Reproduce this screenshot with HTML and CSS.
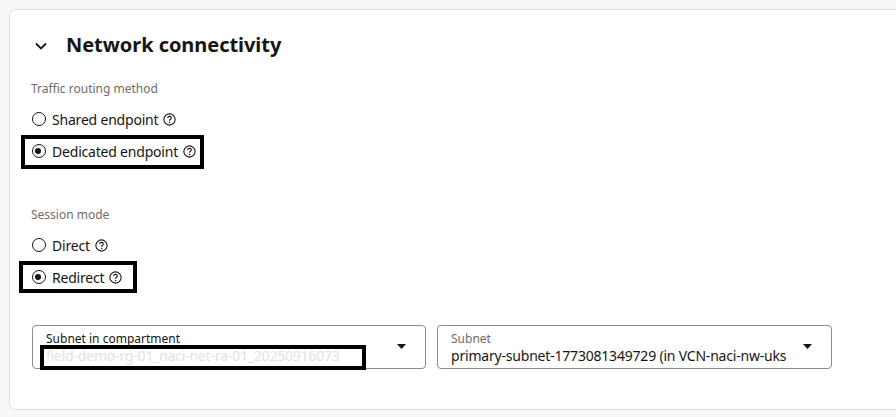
FILE: index.html
```html
<!DOCTYPE html>
<html lang="en">
<head>
<meta charset="utf-8">
<link rel="stylesheet" href="styles.css">
</head>
<body>
<div class="card">
  <div class="header">
    <svg class="chevron" width="12" height="8" viewBox="0 0 12 8"><path d="M1 1.5 L6 6.5 L11 1.5" fill="none" stroke="#161513" stroke-width="1.8"/></svg>
    <h2 class="title">Network connectivity</h2>
  </div>

  <div class="group-label first">Traffic routing method</div>
  <div class="radio-row">
    <span class="radio"></span><span class="radio-text">Shared endpoint</span>
    <svg class="help" width="13" height="13" viewBox="0 0 12 12"><circle cx="6" cy="6" r="5.2" fill="none" stroke="#161513" stroke-width="1"/><path d="M4.3 4.7 C4.3 3.6 5.1 3.1 6 3.1 C6.9 3.1 7.7 3.7 7.7 4.6 C7.7 5.6 6.5 5.7 6.1 6.6 L6.1 7.2" fill="none" stroke="#161513" stroke-width="1"/><circle cx="6.1" cy="8.8" r="0.65" fill="#161513"/></svg>
  </div>
  <div class="radio-row marked marked-wide">
    <span class="radio checked"></span><span class="radio-text">Dedicated endpoint</span>
    <svg class="help" width="13" height="13" viewBox="0 0 12 12"><circle cx="6" cy="6" r="5.2" fill="none" stroke="#161513" stroke-width="1"/><path d="M4.3 4.7 C4.3 3.6 5.1 3.1 6 3.1 C6.9 3.1 7.7 3.7 7.7 4.6 C7.7 5.6 6.5 5.7 6.1 6.6 L6.1 7.2" fill="none" stroke="#161513" stroke-width="1"/><circle cx="6.1" cy="8.8" r="0.65" fill="#161513"/></svg>
    <span class="mark"></span>
  </div>

  <div class="group-label second">Session mode</div>
  <div class="radio-row">
    <span class="radio"></span><span class="radio-text">Direct</span>
    <svg class="help" width="13" height="13" viewBox="0 0 12 12"><circle cx="6" cy="6" r="5.2" fill="none" stroke="#161513" stroke-width="1"/><path d="M4.3 4.7 C4.3 3.6 5.1 3.1 6 3.1 C6.9 3.1 7.7 3.7 7.7 4.6 C7.7 5.6 6.5 5.7 6.1 6.6 L6.1 7.2" fill="none" stroke="#161513" stroke-width="1"/><circle cx="6.1" cy="8.8" r="0.65" fill="#161513"/></svg>
  </div>
  <div class="radio-row marked marked-narrow">
    <span class="radio checked"></span><span class="radio-text">Redirect</span>
    <svg class="help" width="13" height="13" viewBox="0 0 12 12"><circle cx="6" cy="6" r="5.2" fill="none" stroke="#161513" stroke-width="1"/><path d="M4.3 4.7 C4.3 3.6 5.1 3.1 6 3.1 C6.9 3.1 7.7 3.7 7.7 4.6 C7.7 5.6 6.5 5.7 6.1 6.6 L6.1 7.2" fill="none" stroke="#161513" stroke-width="1"/><circle cx="6.1" cy="8.8" r="0.65" fill="#161513"/></svg>
    <span class="mark"></span>
  </div>

  <div class="selects">
    <div class="select">
      <div class="select-body">
        <div class="select-label dark">Subnet in compartment</div>
        <div class="select-value faded">field-demo-rg-01_naci-net-ra-01_20250916073</div>
      </div>
      <svg class="caret" width="9" height="5" viewBox="0 0 9 5"><path d="M0 0 H9 L4.5 5 Z" fill="#161513"/></svg>
      <span class="redact"></span>
    </div>
    <div class="select">
      <div class="select-body">
        <div class="select-label">Subnet</div>
        <div class="select-value">primary-subnet-1773081349729 (in VCN-naci-nw-uks</div>
      </div>
      <svg class="caret" width="9" height="5" viewBox="0 0 9 5"><path d="M0 0 H9 L4.5 5 Z" fill="#161513"/></svg>
    </div>
  </div>
</div>
</body>
</html>
```

FILE: styles.css
```css
* { box-sizing: border-box; }
html, body { margin: 0; padding: 0; }
body {
  background: #f9f8f6;
  font-family: "Noto Sans", "Open Sans", sans-serif;
  color: #161513;
  width: 896px;
  height: 417px;
  overflow: hidden;
}
.card {
  margin: 9px 0 0 9px;
  width: 900px;
  height: 401px;
  background: #ffffff;
  border: 1px solid #e0deda;
  border-right: none;
  border-radius: 6px 0 0 6px;
  padding: 0 0 0 21px;
  display: flex;
  flex-direction: column;
}
.header {
  display: flex;
  align-items: center;
  height: 30px;
  margin-top: 20px;
  margin-left: 4px;
}
.chevron { display: block; margin-top: 1px; }
.title {
  margin: 0 0 0 19px;
  font-size: 20px;
  font-weight: 700;
  line-height: 30px;
  letter-spacing: -0.05px;
}
.group-label {
  font-size: 12px;
  line-height: 16px;
  color: #6f6c67;
  margin-bottom: 6px;
}
.group-label.first { margin-top: 21px; }
.group-label.second { margin-top: 40px; }
.radio-row {
  position: relative;
  display: flex;
  align-items: center;
  height: 32px;
  font-size: 14px;
  letter-spacing: -0.2px;
}
.radio {
  width: 14px;
  height: 14px;
  border: 1.5px solid #161513;
  border-radius: 50%;
  margin-left: 0.5px;
  position: relative;
  flex: none;
}
.radio.checked::after {
  content: "";
  position: absolute;
  left: 2.5px;
  top: 2.5px;
  width: 6px;
  height: 6px;
  border-radius: 50%;
  background: #161513;
}
.radio-text { margin-left: 6.5px; }
.help { margin-left: 5px; display: block; }
.mark {
  position: absolute;
  top: 0;
  height: 34px;
  border: 4px solid #000;
  pointer-events: none;
}
.marked-wide .mark { left: -10px; width: 183px; }
.marked-narrow .mark { left: -12px; width: 118px; height: 32px; }
.selects {
  display: flex;
  gap: 11px;
  margin-top: 32px;
  margin-left: 1px;
}
.select {
  position: relative;
  width: 394px;
  height: 44px;
  border: 1px solid #8f8c87;
  border-radius: 4px;
  display: flex;
  align-items: center;
  padding: 0 19px 0 13px;
}
.select + .select { width: 395px; }
.select-body {
  flex: 1;
  min-width: 0;
  overflow: hidden;
  white-space: nowrap;
  padding-top: 1px;
}
.select-label {
  font-size: 12px;
  line-height: 16px;
  color: #6f6c67;
}
.select-label.dark { color: #161513; }
.select-value {
  font-size: 14px;
  line-height: 18px;
  letter-spacing: -0.2px;
  overflow: hidden;
  white-space: nowrap;
}
.select-value.faded { color: #e4e2df; }
.caret { display: block; flex: none; margin-left: 8px; margin-top: -2px; }
.redact {
  position: absolute;
  left: 7px;
  top: 19px;
  width: 326px;
  height: 25px;
  border: 4px solid #000;
}
```
